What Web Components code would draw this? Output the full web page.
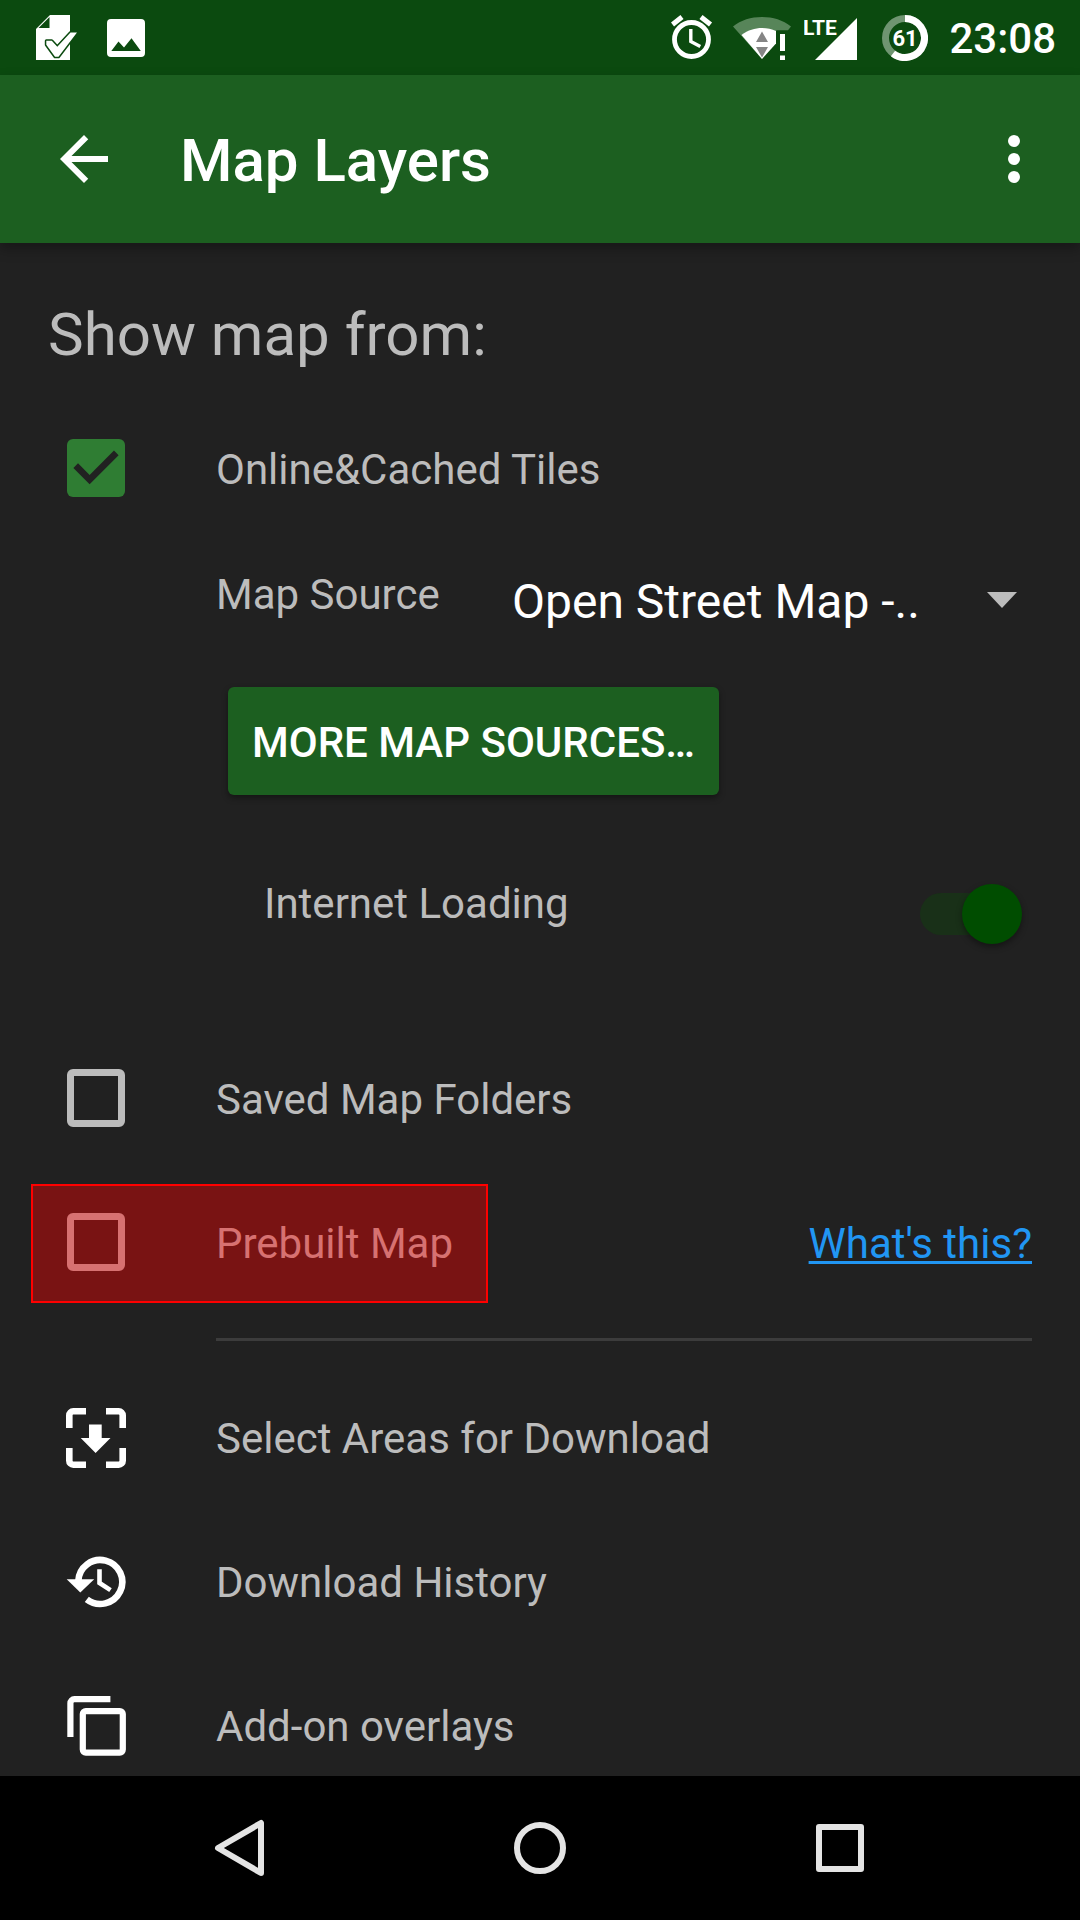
<!DOCTYPE html>
<html lang="en">
<head>
<meta charset="utf-8">
<meta name="viewport" content="width=device-width, initial-scale=1">
<title>Map Layers</title>
<style>
  body { margin: 0; background: #212121; font-family: Roboto, "Noto Sans", sans-serif; }
</style>
</head>
<body>
<map-screen>
  <status-bar slot="status">23:08</status-bar>
  <app-bar slot="bar">Map Layers</app-bar>
  <section-title>Show map from:</section-title>
  <check-row checked>Online&amp;Cached Tiles</check-row>
  <source-picker>Map Source</source-picker>
  <raised-button>More map sources…</raised-button>
  <switch-row>Internet Loading</switch-row>
  <check-row>Saved Map Folders</check-row>
  <check-row highlighted>Prebuilt Map<help-link slot="end">What's this?</help-link></check-row>
  <row-divider></row-divider>
  <action-row icon="area">Select Areas for Download</action-row>
  <action-row icon="history">Download History</action-row>
  <action-row icon="layers">Add-on overlays</action-row>
  <nav-bar slot="nav"></nav-bar>
</map-screen>

<script>
const base = `
  *, *::before, *::after { box-sizing: border-box; }
  :host { display: block; }
  svg { display: block; flex: none; }
  button { font: inherit; color: inherit; background: none; border: 0; margin: 0; padding: 0; cursor: pointer; }
  .text { padding-top: 3px; font-size: 42px; line-height: 50px; color: #bcbcbc; }
`;

function define(name, css, html) {
  const template = document.createElement('template');
  customElements.define(name, class extends HTMLElement {
    constructor() {
      super();
      template.innerHTML = `<style>${base}${css}</style>${typeof html === 'function' ? html(this) : html}`;
      this.attachShadow({ mode: 'open' }).append(template.content.cloneNode(true));
    }
  });
}

define('map-screen', `
  :host { display: flex; flex-direction: column; height: 100vh; background: #212121; }
  main { flex: 1; min-height: 0; overflow: hidden; padding-top: 57px; }
`, `
  <slot name="status"></slot>
  <slot name="bar"></slot>
  <main><slot></slot></main>
  <slot name="nav"></slot>
`);

define('status-bar', `
  :host { display: flex; justify-content: space-between; align-items: center; flex: none; height: 75px;
          padding: 0 24px 0 36px; background: #0b4a0f; color: #fff; }
  .group { display: flex; align-items: center; }
  .notices { gap: 30px; }
  .alarm { margin-right: 20px; }
  .wifi { margin-right: 12px; }
  .signal { margin-right: 25px; }
  .battery { margin-right: 21px; }
  .time { font-size: 42px; font-weight: 500; line-height: 50px; padding-top: 3px; }
  text { font-family: "Liberation Sans Narrow", Roboto, sans-serif; font-weight: 700; fill: #fff; }
`, `
  <div class="group notices">
    <svg width="41" height="46" viewBox="36 15 41 46" fill="#fff" aria-hidden="true">
      <path d="M50 15h20v45H36V29z"/>
      <path d="M38.500 28h11V17z" fill="#0b4a0f"/>
      <path d="M46.300 40.800h5.500l5.500 6L70.500 32.500H77L58.500 56.800h-3.500l-8.700-12z" stroke="#0b4a0f" stroke-width="3" stroke-linejoin="round"/>
      <path d="M46.300 40.800h5.500l5.500 6L70.500 32.500H77L58.500 56.800h-3.500l-8.700-12z"/>
    </svg>
    <svg width="38" height="38" viewBox="0 0 38 38" fill="#fff" aria-hidden="true">
      <path fill-rule="evenodd" d="M4 0h30a4 4 0 0 1 4 4v30a4 4 0 0 1-4 4H4a4 4 0 0 1-4-4V4a4 4 0 0 1 4-4zM4.300 32h29.500L24.500 19.300 17 28.500l-5.500-6z"/>
    </svg>
  </div>
  <div class="group">
    <svg class="alarm" width="42" height="46" viewBox="671 15 42 46" fill="none" stroke="#fff" aria-hidden="true">
      <circle cx="691.500" cy="39.500" r="17" stroke-width="4.800"/>
      <path d="M672.500 24.500l9.500-7.500M710.500 24.500L701 17" stroke-width="5"/>
      <path d="M690.800 29v12.500l9.500 5" stroke-width="3.400"/>
    </svg>
    <svg class="wifi" width="59" height="46" viewBox="733 14 59 46" aria-hidden="true">
      <path d="M733 25.500C741 19 751 16 762 16s21 3 29 9.500l-3 3.700H776.500L762 58z" fill="#578559"/>
      <path d="M741.500 34C748 29 755 27 762 27c5 0 10 1 14 3v12.500L762 58z" fill="#fff"/>
      <path d="M762 30.500l6 10.500h-12zM756 46h12l-6 10.500z" fill="#858585"/>
      <path d="M780 33h5v17h-5zM780 54.500h5v4.500h-5z" fill="#fff"/>
    </svg>
    <svg class="signal" width="53" height="46" viewBox="804 14 53 46" aria-label="LTE signal">
      <text x="803" y="34" font-size="21">LTE</text>
      <path d="M857 17v42h-42z" fill="#fff"/>
    </svg>
    <svg class="battery" width="46" height="46" viewBox="0 0 46 46" aria-label="Battery">
      <circle cx="23" cy="23" r="19.500" fill="none" stroke="#6f9571" stroke-width="7"/>
      <path d="M23 3.500A19.500 19.500 0 1 1 11 38.400" fill="none" stroke="#fff" stroke-width="7"/>
      <text x="23" y="31" font-size="22" text-anchor="middle">61</text>
    </svg>
    <span class="time"><slot></slot></span>
  </div>
`);

define('app-bar', `
  :host { display: flex; align-items: center; flex: none; height: 168px; padding: 0 30px 0 48px;
          background: #1c5f20; color: #fff; box-shadow: 0 6px 12px rgba(0,0,0,.3); }
  h1 { flex: 1; margin: 0; padding: 4px 0 0 60px; font-size: 60px; font-weight: 500; line-height: 70px; }
`, `
  <button aria-label="Back"><svg width="72" height="72" viewBox="0 0 24 24" fill="#fff"><path d="M20 11H7.830l5.590-5.590L12 4l-8 8 8 8 1.410-1.410L7.830 13H20v-2z"/></svg></button>
  <h1><slot></slot></h1>
  <button aria-label="More options"><svg width="72" height="72" viewBox="0 0 24 24" fill="#fff"><circle cx="12" cy="6" r="2"/><circle cx="12" cy="12" r="2"/><circle cx="12" cy="18" r="2"/></svg></button>
`);

define('section-title', `
  h2 { margin: 0 48px 26px; font-size: 60px; font-weight: 400; line-height: 70px; color: #bcbcbc; }
`, `<h2><slot></slot></h2>`);

define('check-row', `
  :host { display: flex; align-items: center; justify-content: space-between; height: 144px; padding-right: 48px; }
  label { position: relative; display: flex; align-items: center; height: 100%; padding-left: 67px; gap: 91px; }
  input { appearance: none; flex: none; width: 58px; height: 58px; margin: 0; border: 7px solid #bcbcbc; border-radius: 6px; }
  input:checked { border: 0; background: #2f7d33; }
  input:checked::before { content: ""; display: block; height: 100%; background: #212121;
    clip-path: polygon(39% 78%, 11% 50%, 19% 42%, 39% 62%, 81% 20%, 89% 28%); }
  :host([highlighted]) label::after { content: ""; position: absolute; inset: 14px -35px 11px 31px;
    border: 2px solid #f00; background: rgba(255,0,0,.4); background-clip: padding-box; pointer-events: none; }
`, el => `
  <label><input type="checkbox" ${el.hasAttribute('checked') ? 'checked' : ''}><span class="text"><slot></slot></span></label>
  <slot name="end"></slot>
`);

define('help-link', `
  a { display: block; padding-top: 3px; font-size: 42px; line-height: 50px; color: #2196f3;
      text-decoration: underline; text-decoration-thickness: 3px; text-underline-offset: 3px; text-decoration-skip-ink: none; }
`, `<a href="#"><slot></slot></a>`);

define('source-picker', `
  :host { display: grid; grid-template-columns: 296px 1fr; align-items: center; height: 120px; padding: 0 48px 0 216px; }
  label { padding-bottom: 14px; }
  .box { display: grid; align-items: center; }
  select, svg { grid-area: 1 / 1; }
  select { appearance: none; width: 100%; border: 0; margin: 0; padding: 3px 60px 0 0; background: none; color: #fff;
           font: inherit; font-size: 48px; line-height: 60px; }
  svg { justify-self: end; margin-right: 15px; pointer-events: none; }
`, `
  <label class="text" for="source"><slot></slot></label>
  <div class="box">
    <select id="source"><option>Open Street Map -..</option></select>
    <svg width="30" height="16" viewBox="0 0 30 16"><path d="M0 0h30L15 16z" fill="#bcbcbc"/></svg>
  </div>
`);

define('raised-button', `
  :host { padding: 27px 48px 0 228px; }
  button { display: block; height: 108px; padding: 3px 24px 0; border-radius: 6px; background: #1c5f20; color: #fff;
           font-size: 42px; font-weight: 500; line-height: 50px; text-transform: uppercase; box-shadow: 0 3px 6px rgba(0,0,0,.4); }
`, `<button><slot></slot></button>`);

define('switch-row', `
  :host { padding: 59px 48px 52px 264px; }
  label { display: flex; align-items: center; justify-content: space-between; height: 120px; }
  .text { padding: 0 0 20px; }
  input { appearance: none; display: flex; align-items: center; justify-content: flex-end; width: 96px; height: 42px;
          margin: 0 16px 0 0; border-radius: 21px; background: #193018; }
  input::before { content: ""; flex: none; width: 60px; height: 60px; margin-right: -6px; border-radius: 50%; background: #004d00;
          box-shadow: 0 3px 6px rgba(0,0,0,.4); }
`, `<label><span class="text"><slot></slot></span><input type="checkbox" role="switch" checked></label>`);

define('row-divider', `
  hr { height: 3px; margin: 24px 48px 25px 216px; border: 0; background: #3c3c3c; }
`, `<hr>`);

const icons = {
  area: `<path d="M3.300 20V7.300a4 4 0 0 1 4-4H20M40 3.300h12.700a4 4 0 0 1 4 4V20M56.700 40v12.700a4 4 0 0 1-4 4H40M20 56.700H7.300a4 4 0 0 1-4-4V40" fill="none" stroke="#fff" stroke-width="6.600"/>
         <path d="M23 16.500h12.700V30h8.800L29.600 45 14.700 30H23z" fill="#fff"/>`,
  history: `<path d="M12.300 29A22 22 0 1 1 20.800 47.300" fill="none" stroke="#fff" stroke-width="6.600"/>
         <path d="M.7 27.200h27.500L14.300 40.500z" fill="#fff"/>
         <path d="M33.500 17.300V31l11 7.200" fill="none" stroke="#fff" stroke-width="4.600"/>`,
  layers: `<path d="M4.400 41V7.200a4 4 0 0 1 4-4h36" fill="none" stroke="#fff" stroke-width="6.200"/>
         <rect x="16.800" y="15.100" width="40" height="41.500" rx="3" fill="none" stroke="#fff" stroke-width="6.200"/>`
};

define('action-row', `
  button { display: flex; align-items: center; gap: 90px; width: 100%; height: 144px; padding: 0 48px 0 66px; text-align: left; }
  .text { padding-top: 1px; }
`, el => `<button><svg width="60" height="60" viewBox="0 0 60 60" aria-hidden="true">${icons[el.getAttribute('icon')]}</svg><span class="text"><slot></slot></span></button>`);

define('nav-bar', `
  :host { flex: none; background: #000; }
  nav { display: flex; height: 144px; padding: 0 90px; }
  button { flex: 1; display: flex; align-items: center; justify-content: center; }
  svg { fill: none; stroke: #e4e4e4; stroke-width: 6; stroke-linejoin: round; }
`, `
  <nav>
    <button aria-label="Back"><svg width="60" height="60" viewBox="0 0 60 60"><path d="M51 5v50L8 30z"/></svg></button>
    <button aria-label="Home"><svg width="60" height="60" viewBox="0 0 60 60"><circle cx="30" cy="30" r="23"/></svg></button>
    <button aria-label="Recent apps"><svg width="60" height="60" viewBox="0 0 60 60"><rect x="9" y="9" width="42" height="42"/></svg></button>
  </nav>
`);
</script>
</body>
</html>
